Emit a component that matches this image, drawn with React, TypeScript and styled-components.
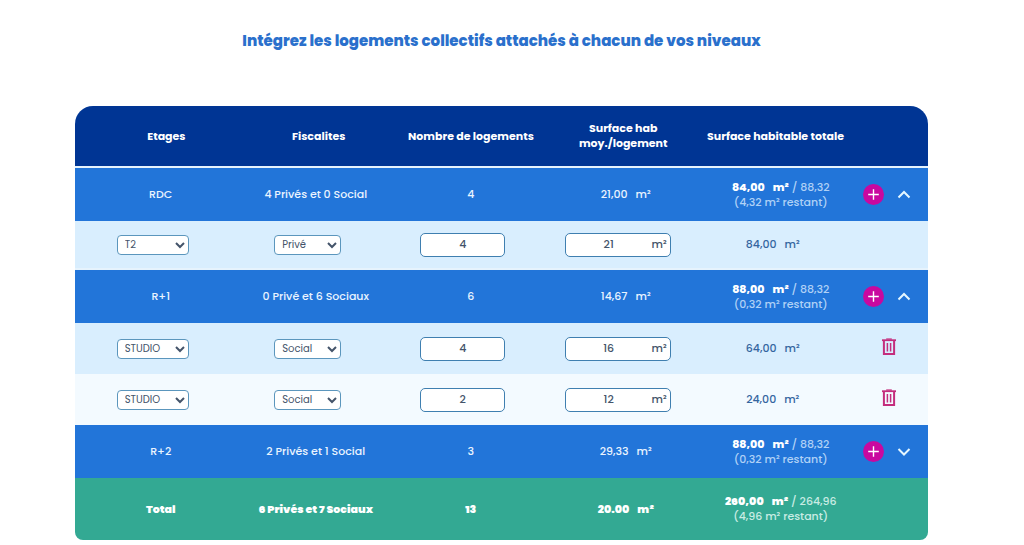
import React from "react";
import styled, { createGlobalStyle } from "styled-components";

const GlobalStyle = createGlobalStyle`
  *, *::before, *::after { box-sizing: border-box; }
  body {
    margin: 0;
    background: #fff;
    font-family: Poppins, Inter, "Open Sans", sans-serif;
    font-size: 11px;
    font-weight: 500;
    line-height: 15px;
  }
`;

const Page = styled.main`
  padding: 29px 21px 4px 0;
`;

const Title = styled.h1`
  margin: 0 0 53px;
  font-size: 15px;
  line-height: 24px;
  font-weight: 800;
  text-align: center;
  color: #2a70cc;
`;

const Table = styled.table`
  display: block;
  width: 85%;
  margin: 0 auto;
  overflow: hidden;
  border-radius: 18px 18px 8px 8px;
  background: #e6f3fd;
`;

const Head = styled.thead`
  display: block;
  margin-bottom: 2px;
`;

const Group = styled.tbody<{ $gap?: boolean }>`
  display: block;
  margin-bottom: ${(p) => (p.$gap ? 2 : 0)}px;
`;

const Foot = styled.tfoot`
  display: block;
`;

const Row = styled.tr`
  display: grid;
  grid-template-columns: repeat(5, minmax(0, 2fr)) minmax(0, 1fr);
  align-items: center;
`;

const HeadRow = styled(Row)`
  min-height: 60px;
  padding-left: 15px;
  background: #003594;
  color: #fff;
`;

const LevelRow = styled(Row)`
  min-height: 53px;
  background: #2275d9;
  color: #eaf4ff;
`;

const DetailRow = styled(Row)<{ $alt?: boolean; $compact?: boolean }>`
  min-height: ${(p) => (p.$compact ? 47 : 51)}px;
  background: ${(p) => (p.$alt ? "#f3faff" : "#d9eefe")};
  color: #34659f;
`;

const TotalRow = styled(Row)`
  min-height: 62px;
  background: #33a993;
  color: #fff;
`;

const HeadCell = styled.th`
  padding: 0;
  font-weight: 700;
  text-align: center;
  white-space: nowrap;
`;

const Cell = styled.td`
  padding: 0;
  text-align: center;
  white-space: nowrap;
`;

const SumCell = styled(Cell)<{ $strong?: boolean }>`
  padding-left: 16px;
  font-weight: ${(p) => (p.$strong ? 900 : 500)};
`;

const ActionCell = styled(Cell)`
  padding-right: 4px;
`;

const Unit = styled.span`
  margin-left: 8px;
`;

const Strong = styled.strong<{ $heavy?: boolean }>`
  font-weight: ${(p) => (p.$heavy ? 900 : 800)};
  color: #fff;
`;

const Muted = styled.span<{ $green?: boolean }>`
  color: ${(p) => (p.$green ? "#c9ece4" : "#b0d1f6")};
`;

const Select = styled.select<{ $wide?: boolean }>`
  width: ${(p) => (p.$wide ? 72 : 67)}px;
  height: 20px;
  padding: 0 0 0 3px;
  border: 1px solid #5b96bd;
  border-radius: 4px;
  background: #fff;
  color: #44546a;
  font-family: inherit;
  font-size: 10px;
  vertical-align: middle;
`;

const CountInput = styled.input`
  width: 85px;
  height: 24px;
  padding: 0;
  border: 1px solid #3f7fb0;
  border-radius: 5px;
  background: #fff;
  color: #44546a;
  font: inherit;
  text-align: center;
  vertical-align: middle;
`;

const AreaField = styled.label`
  display: inline-flex;
  align-items: center;
  width: 106px;
  height: 24px;
  padding-right: 3px;
  border: 1px solid #3f7fb0;
  border-radius: 5px;
  background: #fff;
  color: #44546a;
  vertical-align: middle;
`;

const AreaInput = styled.input`
  flex: 1;
  min-width: 0;
  padding: 0;
  border: 0;
  background: transparent;
  color: inherit;
  font: inherit;
  text-align: center;
`;

const Actions = styled.div`
  display: flex;
  align-items: center;
  justify-content: center;
  gap: 13px;
`;

const IconButton = styled.button`
  display: flex;
  padding: 0;
  border: 0;
  background: none;
  cursor: pointer;
`;

const DeleteButton = styled(IconButton)`
  padding-bottom: 4px;
`;

const AddButton = styled(IconButton)`
  align-items: center;
  justify-content: center;
  width: 21px;
  height: 21px;
  border-radius: 50%;
  background: #c9089f;
`;

const PlusIcon = () => (
  <svg width="21" height="21" viewBox="0 0 21 21" fill="none" stroke="#fff" strokeWidth="1.4">
    <path d="M10.5 5.2v10.6M5.2 10.5h10.6" />
  </svg>
);

const Chevron = ({ up }: { up: boolean }) => (
  <svg width="14" height="14" viewBox="0 0 14 14" fill="none" stroke="#e6f7ff" strokeWidth="2">
    <path d={up ? "M1.5 9.5 7 4 12.5 9.5" : "M1.5 4 7 9.5 12.5 4"} />
  </svg>
);

const TrashIcon = () => (
  <svg width="16" height="18" viewBox="0 0 16 18" fill="none" stroke="#c42d7d">
    <path d="M1 2.2h14" strokeWidth="1.8" />
    <path d="M5.2 1h5.6" strokeWidth="1.2" />
    <path d="M2.9 2.5v13.6h10.2V2.5" strokeWidth="2" />
    <path d="M6.4 5v8.4M9.6 5v8.4" strokeWidth="1.5" />
  </svg>
);

type Detail = { type: string; tax: string; count: string; area: string; total: string };
type Level = {
  name: string;
  split: string;
  count: string;
  mean: string;
  used: string;
  left: string;
  open: boolean;
  details: Detail[];
};

const levels: Level[] = [
  {
    name: "RDC", split: "4 Privés et 0 Social", count: "4", mean: "21,00", used: "84,00", left: "4,32", open: true,
    details: [{ type: "T2", tax: "Privé", count: "4", area: "21", total: "84,00" }],
  },
  {
    name: "R+1", split: "0 Privé et 6 Sociaux", count: "6", mean: "14,67", used: "88,00", left: "0,32", open: true,
    details: [
      { type: "STUDIO", tax: "Social", count: "4", area: "16", total: "64,00" },
      { type: "STUDIO", tax: "Social", count: "2", area: "12", total: "24,00" },
    ],
  },
  {
    name: "R+2", split: "2 Privés et 1 Social", count: "3", mean: "29,33", used: "88,00", left: "0,32", open: false,
    details: [],
  },
];

const DetailLine = ({ item, index, only, level }: { item: Detail; index: number; only: boolean; level: string }) => (
  <DetailRow $alt={index % 2 === 1} $compact={only}>
    <Cell>
      <Select $wide defaultValue={item.type} aria-label={`Type de logement ${level}`}>
        <option>STUDIO</option>
        <option>T2</option>
      </Select>
    </Cell>
    <Cell>
      <Select defaultValue={item.tax} aria-label={`Fiscalité ${level}`}>
        <option>Privé</option>
        <option>Social</option>
      </Select>
    </Cell>
    <Cell>
      <CountInput defaultValue={item.count} inputMode="numeric" aria-label={`Nombre de logements ${level}`} />
    </Cell>
    <Cell>
      <AreaField>
        <AreaInput defaultValue={item.area} inputMode="decimal" aria-label={`Surface moyenne ${level}`} />
        m²
      </AreaField>
    </Cell>
    <Cell>
      {item.total}
      <Unit>m²</Unit>
    </Cell>
    <Cell>
      {!only && (
        <Actions>
          <DeleteButton type="button" aria-label="Supprimer">
            <TrashIcon />
          </DeleteButton>
        </Actions>
      )}
    </Cell>
  </DetailRow>
);

export default function App() {
  return (
    <Page>
      <GlobalStyle />
      <Title>Intégrez les logements collectifs attachés à chacun de vos niveaux</Title>
      <Table>
        <Head>
          <HeadRow>
            <HeadCell scope="col">Etages</HeadCell>
            <HeadCell scope="col">Fiscalites</HeadCell>
            <HeadCell scope="col">Nombre de logements</HeadCell>
            <HeadCell scope="col">
              Surface hab
              <br />
              moy./logement
            </HeadCell>
            <HeadCell scope="col">Surface habitable totale</HeadCell>
          </HeadRow>
        </Head>
        {levels.map((level, i) => (
          <Group key={level.name} $gap={i === 0}>
            <LevelRow>
              <SumCell>{level.name}</SumCell>
              <SumCell>{level.split}</SumCell>
              <SumCell>{level.count}</SumCell>
              <SumCell>
                {level.mean}
                <Unit>m²</Unit>
              </SumCell>
              <SumCell>
                <Strong>
                  {level.used}
                  <Unit>m²</Unit>
                </Strong>
                <Muted>
                  {" "}/ 88,32
                  <br />({level.left} m² restant)
                </Muted>
              </SumCell>
              <ActionCell>
                <Actions>
                  <AddButton type="button" aria-label={`Ajouter un logement ${level.name}`}>
                    <PlusIcon />
                  </AddButton>
                  <IconButton type="button" aria-expanded={level.open} aria-label={`Détails ${level.name}`}>
                    <Chevron up={level.open} />
                  </IconButton>
                </Actions>
              </ActionCell>
            </LevelRow>
            {level.details.map((item, n) => (
              <DetailLine key={n} item={item} index={n} only={level.details.length === 1} level={level.name} />
            ))}
          </Group>
        ))}
        <Foot>
          <TotalRow>
            <SumCell $strong>Total</SumCell>
            <SumCell $strong>6 Privés et 7 Sociaux</SumCell>
            <SumCell $strong>13</SumCell>
            <SumCell $strong>
              20.00
              <Unit>m²</Unit>
            </SumCell>
            <SumCell>
              <Strong $heavy>
                260,00
                <Unit>m²</Unit>
              </Strong>
              <Muted $green>
                {" "}/ 264,96
                <br />
                (4,96 m² restant)
              </Muted>
            </SumCell>
          </TotalRow>
        </Foot>
      </Table>
    </Page>
  );
}
